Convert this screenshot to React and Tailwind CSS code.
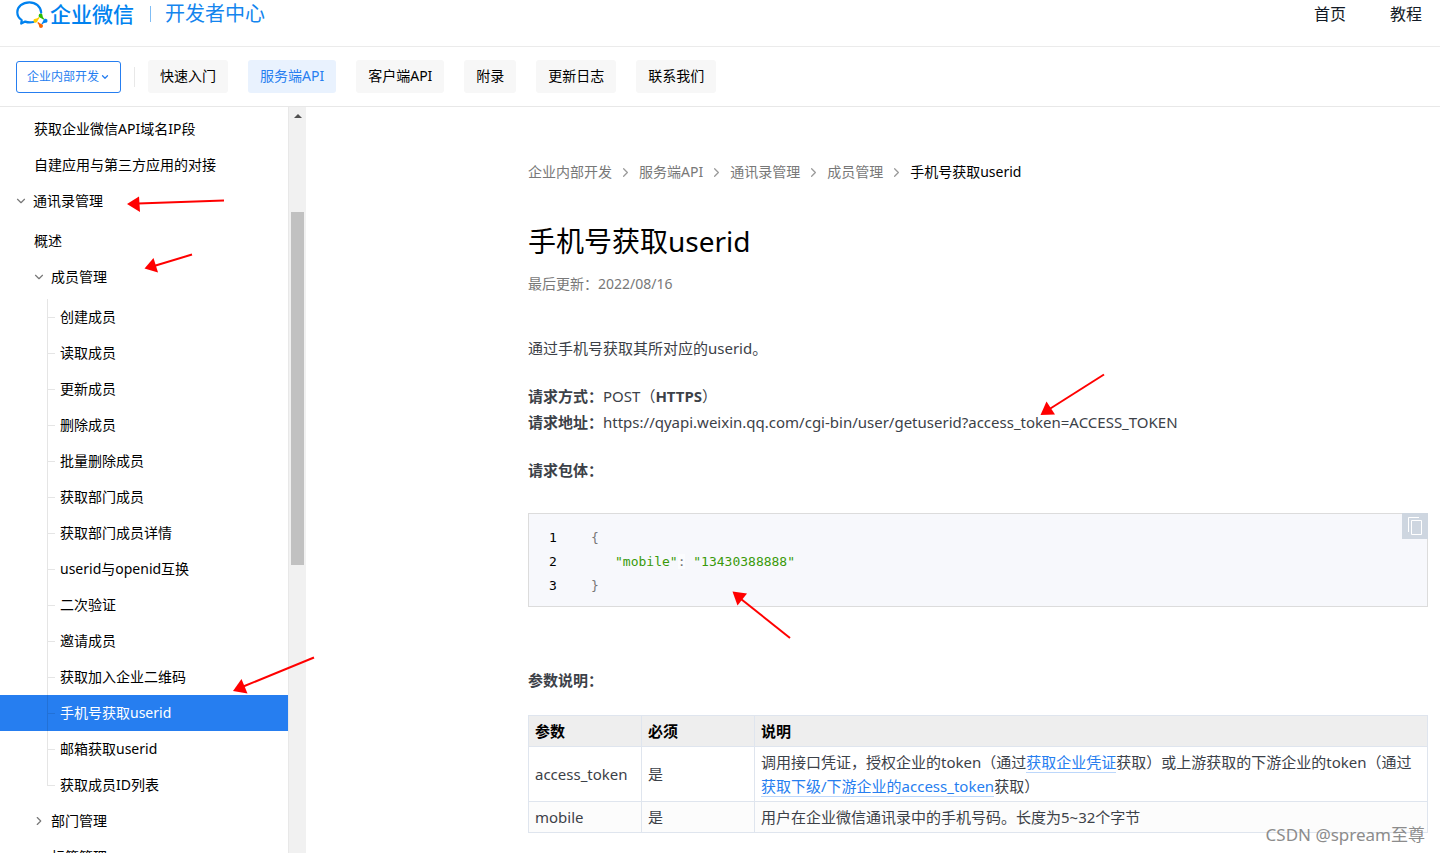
import React from "react";
import { ChevronDown, ChevronRight } from "lucide-react";

const TABS = ["快速入门", "服务端API", "客户端API", "附录", "更新日志", "联系我们"];

const MEMBER_PAGES = [
    "创建成员",
    "读取成员",
    "更新成员",
    "删除成员",
    "批量删除成员",
    "获取部门成员",
    "获取部门成员详情",
    "userid与openid互换",
    "二次验证",
    "邀请成员",
    "获取加入企业二维码",
    "手机号获取userid",
    "邮箱获取userid",
    "获取成员ID列表",
];

const CRUMBS = ["企业内部开发", "服务端API", "通讯录管理", "成员管理"];

function Logo() {
    return (
        <svg width="32" height="28" viewBox="0 0 32 28" fill="none" aria-hidden="true">
            <path
                d="M25.2 12.6C24.6 6.500 19.800 2.300 13.400 2.300C6.600 2.300 1.300 6.700 1.300 12.200C1.300 15.600 3 18.300 5.700 20.100L5.200 23.600L9.200 21.600C11.600 22.500 14.600 22.700 17.600 22"
                stroke="#0082ef"
                strokeWidth="2.200"
                strokeLinecap="round"
                strokeLinejoin="round"
            />
            <path d="M24.600 13.600a2 2 0 0 1 2 2.100c.1 1.400.8 2.300 1.800 3l-1 1c-1.300-1.200-2.200-1.600-3.300-2a2.100 2.100 0 0 1 .5-4.100z" fill="#2dbc00" />
            <path d="M31.500 21.200a2 2 0 0 1-2.100 1.600c-1.400.1-2.300.8-3 1.800l-1-1c1.200-1.300 1.600-2.200 2-3.300a2.100 2.100 0 0 1 4.100.9z" fill="#0082ef" />
            <path d="M25 28a2 2 0 0 1-2-2.100c-.1-1.400-.8-2.300-1.800-3l1-1c1.300 1.200 2.200 1.600 3.300 2a2.100 2.100 0 0 1-.5 4.100z" fill="#fb6500" />
            <path d="M17.400 20.700a2 2 0 0 1 2.100-1.900c1.400-.1 2.300-.8 3-1.800l1 1c-1.200 1.300-1.600 2.200-2 3.300a2.100 2.100 0 0 1-4.100-.6z" fill="#fc0" />
        </svg>
    );
}

function Header() {
    return (
        <header className="flex items-start justify-between border-b border-[#ebebeb] pr-[18px] pb-[18px] pl-4">
            <a href="#" className="flex h-7 items-center">
                <Logo />
                <span className="ml-[2px] text-[21px] leading-7 font-medium text-[#0082ef]">企业微信</span>
                <span className="ml-4 h-4 w-px bg-[#7fbdf5]" />
                <span className="ml-3.5 text-xl leading-7 text-[#1485ee]">开发者中心</span>
            </a>
            <nav className="flex h-7 items-center gap-11 text-base text-[#131b26]">
                <a href="#">首页</a>
                <a href="#">教程</a>
            </nav>
        </header>
    );
}

function Toolbar() {
    return (
        <div className="flex items-center border-b border-[#e8e8e8] pt-[13px] pb-[13px] pl-4">
            <button type="button" className="flex h-8 items-center rounded-[3px] border border-[#267ef0] px-2.5 text-xs text-[#267ef0]">
                企业内部开发
                <ChevronDown className="ml-px size-2.5" strokeWidth={3} />
            </button>
            <span className="ml-[13px] h-5 w-px bg-[#e8e8e8]" />
            <nav className="ml-[13px] flex gap-5 text-sm">
                {TABS.map(tab => (
                    <a
                        key={tab}
                        href="#"
                        className={tab === "服务端API"
                            ? "rounded-[3px] bg-[#e9f2fe] px-3 pt-[5px] pb-[7px] leading-[21px] text-[#267ef0]"
                            : "rounded-[3px] bg-[#f7f7f7] px-3 pt-[5px] pb-[7px] leading-[21px] text-black"}
                    >
                        {tab}
                    </a>
                ))}
            </nav>
        </div>
    );
}

function TreeItem({ label, active, last }) {
    return (
        <li>
            <a href="#" className={active ? "flex h-9 items-center bg-[#267ef0] pl-[47px] text-white" : "flex h-9 items-center pl-[47px]"}>
                <span className={last
                    ? "flex h-[19px] w-2 items-end self-start border-l border-black/10"
                    : "flex h-9 w-2 items-center border-l border-black/10"}
                >
                    <span className="h-px w-full bg-black/10" />
                </span>
                <span className="ml-[5px]">{label}</span>
            </a>
        </li>
    );
}

function Sidebar() {
    return (
        <aside className="flex w-[306px] shrink-0">
            <nav className="min-w-0 flex-1 overflow-hidden pt-1 text-sm text-black">
                <a href="#" className="flex h-9 items-center pl-[34px]">获取企业微信API域名IP段</a>
                <a href="#" className="flex h-9 items-center pl-[34px]">自建应用与第三方应用的对接</a>
                <button type="button" className="mb-1 flex h-9 w-full items-center pl-3.5">
                    <ChevronDown className="size-3.5 text-[#787878]" strokeWidth={2} />
                    <span className="ml-[5px]">通讯录管理</span>
                </button>
                <a href="#" className="flex h-9 items-center pl-[34px]">概述</a>
                <button type="button" className="mb-1 flex h-9 w-full items-center pl-8">
                    <ChevronDown className="size-3.5 text-[#787878]" strokeWidth={2} />
                    <span className="ml-[5px]">成员管理</span>
                </button>
                <ul>
                    {MEMBER_PAGES.map((label, i) => (
                        <TreeItem key={label} label={label} active={label === "手机号获取userid"} last={i === MEMBER_PAGES.length - 1} />
                    ))}
                </ul>
                {["部门管理", "标签管理"].map(label => (
                    <button key={label} type="button" className="flex h-9 w-full items-center pl-8">
                        <ChevronRight className="size-3.5 text-[#787878]" strokeWidth={2} />
                        <span className="ml-[5px]">{label}</span>
                    </button>
                ))}
            </nav>
            <div className="flex w-[18px] flex-col items-center border-l border-[#e8e8e8] bg-[#f1f1f1]">
                <svg className="mt-1.5" width="8" height="6" viewBox="0 0 8 6" aria-hidden="true">
                    <path d="M4 1L8 5H0z" fill="#505050" />
                </svg>
                <div className="mt-[93px] h-[353px] w-[13px] bg-[#c1c1c1]" />
            </div>
        </aside>
    );
}

function Breadcrumb() {
    return (
        <nav className="flex items-center text-sm leading-5 text-[#787878]">
            {CRUMBS.map(crumb => (
                <React.Fragment key={crumb}>
                    <a href="#">{crumb}</a>
                    <ChevronRight className="mx-1.5 size-[15px] text-[#9a9a9a]" strokeWidth={2} />
                </React.Fragment>
            ))}
            <span className="text-black">手机号获取userid</span>
        </nav>
    );
}

function CodeBlock() {
    return (
        <div className="mt-[30px] flex items-start justify-between border border-[#dcdcdc] bg-[#f7f8fc] font-['DejaVu_Sans_Mono','Liberation_Mono',monospace] text-[13px] leading-6">
            <div className="flex pt-3 pb-2 pl-5">
                <div className="w-[42px] text-black">
                    <div>1</div>
                    <div>2</div>
                    <div>3</div>
                </div>
                <div className="text-[#777]">
                    <div>{"{"}</div>
                    <div className="pl-6">
                        <span className="text-[#3a9a0a]">"mobile"</span>
                        <span className="bg-white/50">:</span>
                        {" "}
                        <span className="text-[#3a9a0a]">"13430388888"</span>
                    </div>
                    <div>{"}"}</div>
                </div>
            </div>
            <button type="button" aria-label="复制" className="-mt-px -mr-px flex size-[26px] items-center justify-center bg-[#ced6e0]">
                <svg width="16" height="20" viewBox="0 0 16 20" fill="none" stroke="#fff" aria-hidden="true">
                    <path d="M1.500 16V1.500H12" />
                    <path d="M4.500 4.500H14.500V18.500H4.500z" />
                </svg>
            </button>
        </div>
    );
}

function ParamTable() {
    const cell = "border border-[#dfe5ee] px-1.5 py-[3px] text-left";
    const link = "border-b border-[#bcd7fb] text-[#267ef0]";
    return (
        <table className="mt-[22px] w-full table-fixed border-collapse text-[15px] leading-6">
            <colgroup>
                <col className="w-[113px]" />
                <col className="w-[113px]" />
                <col />
            </colgroup>
            <thead className="bg-[#eee] text-black">
                <tr>
                    <th className={cell}>参数</th>
                    <th className={cell}>必须</th>
                    <th className={cell}>说明</th>
                </tr>
            </thead>
            <tbody>
                <tr>
                    <td className={cell}>access_token</td>
                    <td className={cell}>是</td>
                    <td className={cell}>
                        调用接口凭证，授权企业的token（通过<a href="#" className={link}>获取企业凭证</a>获取）或上游获取的下游企业的token（通过
                        <a href="#" className={link}>获取下级/下游企业的access_token</a>获取）
                    </td>
                </tr>
                <tr className="bg-[#fcfcfc]">
                    <td className={cell}>mobile</td>
                    <td className={cell}>是</td>
                    <td className={cell}>用户在企业微信通讯录中的手机号码。长度为5~32个字节</td>
                </tr>
            </tbody>
        </table>
    );
}

function Article() {
    return (
        <main className="min-w-0 flex-1 pt-[55px] pr-3 pl-[222px] text-[#3c4148]">
            <Breadcrumb />
            <h1 className="mt-[39px] text-[28px] leading-10 text-black">手机号获取userid</h1>
            <p className="mt-[13px] text-sm leading-5 text-[#787878]">最后更新：2022/08/16</p>
            <div className="mt-[41px] text-[15px] leading-[26px]">
                <p>通过手机号获取其所对应的userid。</p>
                <p className="mt-[22px]">
                    <strong>请求方式：</strong>POST（<strong>HTTPS</strong>）
                    <br />
                    <strong>请求地址：</strong>https://qyapi.weixin.qq.com/cgi-bin/user/getuserid?access_token=ACCESS_TOKEN
                </p>
                <p className="mt-[22px] font-bold">请求包体：</p>
            </div>
            <CodeBlock />
            <p className="mt-[60px] text-[15px] leading-[26px] font-bold">参数说明：</p>
            <ParamTable />
        </main>
    );
}

// hand-drawn red pointers laid over the page
function Arrows() {
    return (
        <svg className="pointer-events-none absolute top-0 left-0" width="1440" height="853" stroke="#f00" strokeWidth="2" fill="#f00" aria-hidden="true">
            <path d="M224 200.500L138 203.500" />
            <path d="M127 204L139 196.500L140 212z" strokeWidth="0" />
            <path d="M192 254.500L154 266" />
            <path d="M144.500 268.500L153.500 258L158 272.500z" strokeWidth="0" />
            <path d="M314 657.500L242 687" />
            <path d="M233 691L241.500 679L247.500 693.500z" strokeWidth="0" />
            <path d="M1104 374.500L1048 410" />
            <path d="M1040.500 415L1046.500 401.500L1055 414.500z" strokeWidth="0" />
            <path d="M790 638L741 599" />
            <path d="M732.500 591.500L747 593.500L737.500 605.500z" strokeWidth="0" />
        </svg>
    );
}

export default function App() {
    return (
        <div className="relative flex h-screen flex-col overflow-hidden bg-white font-['Noto_Sans','Noto_Sans_CJK_SC',sans-serif]">
            <Header />
            <Toolbar />
            <div className="flex min-h-0 flex-1">
                <Sidebar />
                <Article />
            </div>
            <Arrows />
            <div className="absolute right-[15px] bottom-1.5 text-[17px] leading-6 text-[#8c8c8c]">CSDN @spream至尊</div>
        </div>
    );
}
